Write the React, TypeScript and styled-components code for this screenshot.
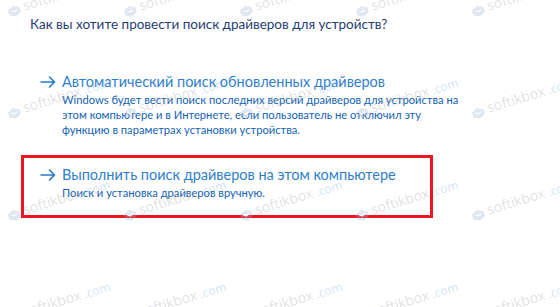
import React from 'react'
import styled, { createGlobalStyle } from 'styled-components'

const GlobalStyle = createGlobalStyle`
  html, body {
    margin: 0;
    padding: 0;
    background: #fff;
  }
  body {
    font-family: Lato, 'Noto Sans', Arial, sans-serif;
  }
`

const Page = styled.div`
  position: relative;
  width: 560px;
  height: 307px;
  overflow: hidden;
  background: #fff;
  padding: 14px 0 0 21px;
  box-sizing: border-box;
`

const Heading = styled.h1`
  margin: 0 0 28px 9px;
  font-size: 13.5px;
  line-height: 20px;
  font-weight: 400;
  color: #1f3d73;
`

const OptionList = styled.div`
  display: flex;
  flex-direction: column;
  width: 412px;
`

const Option = styled.div<{ $selected?: boolean }>`
  display: grid;
  grid-template-columns: 16px 1fr;
  column-gap: 6px;
  padding: 6px 16px 15px;
  border: 3px solid ${p => (p.$selected ? '#ec1520' : 'transparent')};
`

const ArrowCell = styled.div`
  display: flex;
  align-items: center;
  height: 21px;
  color: #2a78c8;
`

const OptionTitle = styled.div`
  font-size: 14.5px;
  line-height: 21px;
  color: #2f7fcc;
  white-space: nowrap;
`

const OptionText = styled.div`
  grid-column: 2;
  font-size: 11.2px;
  line-height: 15px;
  color: #1463b4;
  white-space: pre;
`

const Watermarks = styled.div`
  position: absolute;
  inset: 0;
  pointer-events: none;
  display: grid;
  grid-template-columns: repeat(5, 116px);
  grid-auto-rows: 102px;
  padding: 3px 0 0 7px;
`

const Mark = styled.div`
  display: flex;
  align-items: flex-end;
  gap: 3px;
  height: 16px;
  transform: rotate(-17deg);
  transform-origin: left center;
  white-space: nowrap;
`

const MarkName = styled.span`
  font-family: 'Open Sans', 'Noto Sans', sans-serif;
  font-size: 14px;
  line-height: 16px;
  color: rgba(150, 150, 150, 0.3);
`

const MarkDomain = styled.span`
  font-family: 'Open Sans', 'Noto Sans', sans-serif;
  font-size: 12px;
  line-height: 15px;
  color: rgba(90, 150, 220, 0.3);
`

const Arrow = () => (
  <svg width="16" height="12" viewBox="0 0 16 12" fill="none">
    <path d="M1 6h13.5M9.5 1l5 5-5 5" stroke="currentColor" strokeWidth="1.6" strokeLinecap="round" strokeLinejoin="round" />
  </svg>
)

const MarkLogo = () => (
  <svg width="14" height="12" viewBox="0 0 14 12" fill="none">
    <path d="M1 4l6-3 6 3v5l-6 3-6-3z" fill="rgba(150,175,205,0.3)" />
    <path d="M4 5.5l3 1.5 3-1.5" stroke="#fff" strokeWidth="1.2" />
  </svg>
)

const options = [
  {
    title: 'Автоматический поиск обновленных драйверов',
    text:
      'Windows будет вести поиск последних версий драйверов для устройства на\nэтом компьютере и в Интернете, если пользователь не отключил эту\nфункцию в параметрах установки устройства.',
    selected: false,
  },
  {
    title: 'Выполнить поиск драйверов на этом компьютере',
    text: 'Поиск и установка драйверов вручную.',
    selected: true,
  },
]

export default function App() {
  return (
    <>
      <GlobalStyle />
      <Page>
        <Heading>Как вы хотите провести поиск драйверов для устройств?</Heading>
        <OptionList>
          {options.map(o => (
            <Option key={o.title} $selected={o.selected}>
              <ArrowCell>
                <Arrow />
              </ArrowCell>
              <OptionTitle>{o.title}</OptionTitle>
              <OptionText>{o.text}</OptionText>
            </Option>
          ))}
        </OptionList>
        <Watermarks>
          {Array.from({ length: 20 }).map((_, i) => (
            <Mark key={i}>
              <MarkLogo />
              <MarkName>softikbox</MarkName>
              <MarkDomain>.com</MarkDomain>
            </Mark>
          ))}
        </Watermarks>
      </Page>
    </>
  )
}
